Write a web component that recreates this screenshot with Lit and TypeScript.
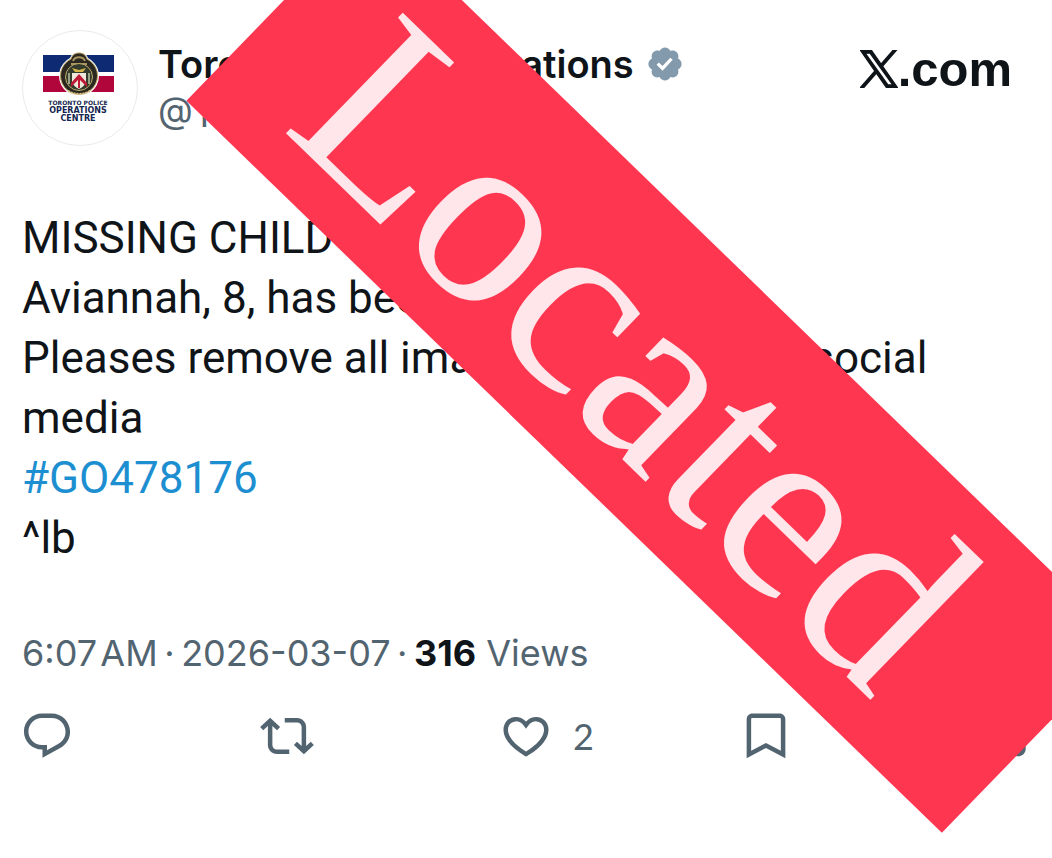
import { LitElement, html, css, svg } from "lit";
import { customElement } from "lit/decorators.js";

const REPLY = "M1.751 10c0-4.42 3.584-8 8.005-8h4.366c4.49 0 8.129 3.64 8.129 8.13 0 2.96-1.607 5.68-4.196 7.11l-8.054 4.46v-3.69h-.067c-4.49.1-8.183-3.51-8.183-8.01zm8.005-6c-3.317 0-6.005 2.69-6.005 6 0 3.37 2.77 6.08 6.138 6.01l.351-.01h1.761v2.3l5.087-2.81c1.951-1.08 3.163-3.13 3.163-5.36 0-3.39-2.744-6.13-6.129-6.13H9.756z";
const REPOST = "M4.5 3.88l4.432 4.14-1.364 1.46L5.5 7.55V16c0 1.1.896 2 2 2H13v2H7.5c-2.209 0-4-1.79-4-4V7.55L1.432 9.48.068 8.02 4.5 3.88zM16.5 6H11V4h5.5c2.209 0 4 1.79 4 4v8.45l2.068-1.93 1.364 1.46-4.432 4.14-4.432-4.14 1.364-1.46 2.068 1.93V8c0-1.1-.896-2-2-2z";
const LIKE = "M16.697 5.5c-1.222-.06-2.679.51-3.89 2.16l-.805 1.09-.806-1.09C9.984 6.01 8.526 5.44 7.304 5.5c-1.243.07-2.349.78-2.91 1.91-.552 1.12-.633 2.78.479 4.82 1.074 1.97 3.257 4.27 7.129 6.61 3.87-2.34 6.052-4.64 7.126-6.61 1.111-2.04 1.03-3.7.477-4.82-.561-1.13-1.666-1.84-2.908-1.91zm4.187 7.69c-1.351 2.48-4.001 5.12-8.379 7.67l-.503.3-.504-.3c-4.379-2.55-7.029-5.19-8.382-7.67-1.36-2.5-1.41-4.86-.514-6.67.887-1.79 2.647-2.91 4.601-3.01 1.651-.09 3.368.56 4.798 2.01 1.429-1.45 3.146-2.1 4.796-2.01 1.954.1 3.714 1.22 4.601 3.01.896 1.81.846 4.17-.514 6.67z";
const BOOKMARK = "M3.4 4.5C3.4 3.12 4.5 2 5.9 2h12.2c1.4 0 2.5 1.12 2.5 2.5v17.4L12 17.3l-8.6 4.6V4.5zM5.9 4c-.276 0-.5.22-.5.5v14.1L12 15.1l6.6 3.5V4.5c0-.28-.224-.5-.5-.5H5.9z";
const SHARE = "M12 2.59l5.7 5.7-1.41 1.42L13 6.41V16h-2V6.41l-3.3 3.3-1.41-1.42L12 2.59zM21.2 15v2.5c0 2-1.5 3.5-3.5 3.5H6.5C4.5 21 3 19.5 3 17.5V15h2v2.5c0 .9.6 1.5 1.5 1.5h11.2c.9 0 1.5-.6 1.5-1.5V15h2z";

@customElement("post-action")
class PostAction extends LitElement {
  static properties = {
    label: { type: String },
    path: { type: String },
    count: { type: String },
  };
  declare label: string;
  declare path: string;
  declare count: string;

  static styles = css`
    :host { display: block; }
    button {
      display: flex;
      align-items: center;
      gap: 20px;
      padding: 0;
      border: 0;
      background: none;
      color: #536471;
      font: 36px/54px Lato, sans-serif;
      cursor: pointer;
    }
    svg { display: block; width: 54px; height: 54px; fill: currentColor; }
  `;

  render() {
    return html`<button aria-label=${this.label}>
      <svg viewBox="0 0 24 24" aria-hidden="true"><path d=${this.path}></path></svg>
      ${this.count ? html`<span>${this.count}</span>` : ""}
    </button>`;
  }
}

@customElement("app-root")
class AppRoot extends LitElement {
  static styles = css`
    :host {
      display: block;
      position: relative;
      min-height: 100vh;
      overflow: hidden;
      background: #fff;
      color: #0f1419;
      font-family: Roboto, "Liberation Sans", sans-serif;
    }
    .post { padding: 30px 20px 40px 22px; }
    header { display: flex; align-items: flex-start; gap: 20px; }
    .avatar { flex: none; width: 116px; height: 116px; }
    .avatar text { font-family: "DejaVu Sans", sans-serif; font-weight: 700; fill: #14264f; text-anchor: middle; }
    .who { flex: 1; padding-top: 10px; }
    .name { display: flex; align-items: center; gap: 14px; font: 600 38px/48px Inter, sans-serif; white-space: nowrap; }
    .badge { width: 34px; height: 34px; fill: #829aab; }
    .handle { color: #536471; font-family: Inter, sans-serif; font-size: 36px; line-height: 52px; }
    .brand {
      display: flex;
      align-items: center;
      padding: 14px 20px 0 0;
      color: inherit;
      text-decoration: none;
      font: 700 49px/50px "Liberation Sans", Arial, sans-serif;
    }
    .brand svg { width: 38px; height: 38px; }
    .body { margin: 62px 0 0; font-size: 44px; line-height: 60px; }
    .body p { margin: 0; }
    .tag { color: #1d8fd1; text-decoration: none; }
    .meta { margin: 61px 0 0; color: #536471; font-family: Inter, sans-serif; font-size: 36px; line-height: 48px; }
    .meta strong { color: #0f1419; }
    .actions { display: grid; grid-template-columns: repeat(4, 1fr) 54px; margin: 32px 0 0 -2px; }
    .stamp {
      position: absolute;
      top: 240px;
      left: 130px;
      width: 100%;
      box-sizing: border-box;
      padding-right: 54px;
      display: flex;
      align-items: center;
      justify-content: center;
      background: #ff3650;
      color: #ffe6ea;
      font: 256px/264px "Liberation Serif", serif;
      transform: rotate(44.1deg);
    }
  `;

  render() {
    return html`
      <article class="post">
        <header>
          ${this.avatar()}
          <div class="who">
            <div class="name">
              <span>Toronto Police Operations</span>
              <svg class="badge" viewBox="1.5 1.5 21 21" role="img" aria-label="Verified"><path d="M22.25 12c0-1.43-.88-2.67-2.19-3.34.46-1.39.2-2.9-.81-3.91s-2.52-1.27-3.91-.81c-.66-1.31-1.91-2.19-3.34-2.19s-2.67.88-3.33 2.19c-1.4-.46-2.91-.2-3.92.81s-1.26 2.52-.8 3.91c-1.31.67-2.2 1.91-2.2 3.34s.89 2.67 2.2 3.34c-.46 1.39-.21 2.9.8 3.91s2.52 1.26 3.91.81c.67 1.31 1.91 2.19 3.34 2.19s2.68-.88 3.34-2.19c1.39.45 2.9.2 3.91-.81s1.27-2.52.81-3.91c1.31-.67 2.19-1.91 2.19-3.34zm-11.71 4.2L6.8 12.46l1.41-1.42 2.26 2.26 4.8-5.23 1.47 1.36-6.2 6.77z"></path></svg>
            </div>
            <div class="handle">@TPSOperations</div>
          </div>
          <a class="brand" href="#" aria-label="X.com">
            <svg viewBox="-.5 -.5 25 25" aria-hidden="true"><path fill="#0f1419" stroke="#0f1419" stroke-width=".9" d="M14.258 10.152 23.176 0h-2.113l-7.747 8.813L7.133 0H0l9.352 13.328L0 23.973h2.113l8.176-9.309 6.531 9.309h7.133zm-2.895 3.293-.949-1.328L2.875 1.56h3.246l6.086 8.523.945 1.328 7.91 11.078h-3.246z"></path></svg>
            <span>.com</span>
          </a>
        </header>
        <div class="body">
          <p>MISSING CHILD - LOCATED</p>
          <p>Aviannah, 8, has been located.</p>
          <p>Pleases remove all images from all your social<br>media</p>
          <p><a class="tag" href="#">#GO478176</a></p>
          <p>^lb</p>
        </div>
        <p class="meta">6:07&#8202;AM&#8201;·&#8201;2026-03-07&#8201;·&#8201;<strong>316</strong> Views</p>
        <div class="actions">
          <post-action label="Reply" .path=${REPLY}></post-action>
          <post-action label="Repost" .path=${REPOST}></post-action>
          <post-action label="Like" count="2" .path=${LIKE}></post-action>
          <post-action label="Bookmark" .path=${BOOKMARK}></post-action>
          <post-action label="Share" .path=${SHARE}></post-action>
        </div>
      </article>
      <div class="stamp"><span>Located</span></div>
    `;
  }

  private avatar() {
    return html`<svg class="avatar" viewBox="0 0 116 116" role="img" aria-label="Toronto Police Operations Centre">
      <circle cx="58" cy="58" r="57.5" fill="#fff" stroke="#e8eaec"></circle>
      ${svg`
        <rect x="21" y="25" width="71" height="17" fill="#0d2a73"></rect>
        <rect x="21" y="46" width="71" height="16" fill="#b1063c"></rect>
        <path d="M57 22c5 0 8 3 9 6a20 20 0 1 1-18 0c1-3 4-6 9-6z" fill="#fff"></path>
        <path d="M57 23c4 0 7 2 8 6a18.5 18.5 0 1 1-16 0c1-4 4-6 8-6z" fill="#2a2820" stroke="#b9a05e" stroke-width="1"></path>
        <path d="M51 31c2-5 10-5 12 0M49 34h16" fill="none" stroke="#a8955f" stroke-width="2"></path>
        <circle cx="57" cy="47" r="13.5" fill="#333b2d" stroke="#c2ab6c" stroke-width="1"></circle>
        <path d="M50 38l7 2 7-2-3 4h-8z" fill="#d4b64a"></path>
        <path d="M50 43h14v9q-2 5-7 7-5-2-7-7z" fill="#eee9dc"></path>
        <path d="M49 53l8-9 8 9v4l-8-8-8 8z" fill="#bd1835"></path>
        <path d="M57 49v9" stroke="#bd1835" stroke-width="2"></path>
        <path d="M47 43v11M67 43v11" stroke="#9aa286" stroke-width="2"></path>
        <path d="M46 61q11 6 22 0" fill="none" stroke="#d0bd80" stroke-width="2" stroke-dasharray="2 1"></path>
        <text x="56" y="75" font-size="6">TORONTO POLICE</text>
        <text x="56" y="83" font-size="8">OPERATIONS</text>
        <text x="56" y="91" font-size="8">CENTRE</text>
      `}
    </svg>`;
  }
}
